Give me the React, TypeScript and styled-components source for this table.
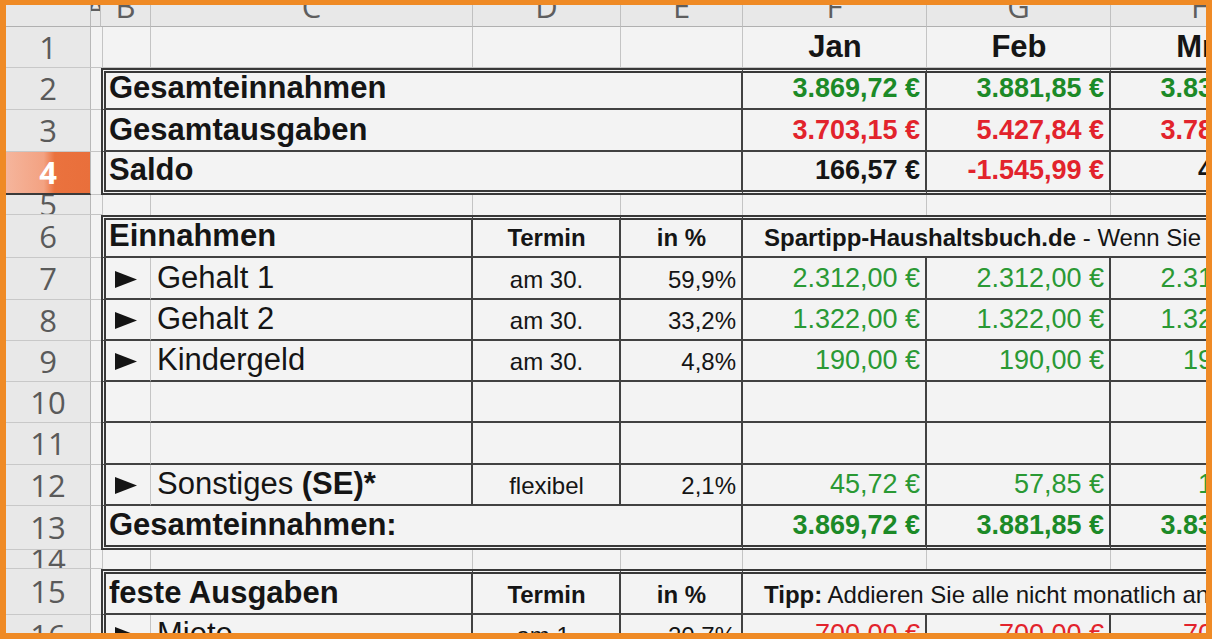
import React from "react";
import styled, { createGlobalStyle } from "styled-components";

type Line = "none" | "grid" | "dark" | "double";
type Size = "lg" | "md" | "sm";
type Tone = "ink" | "green" | "red" | "greenLight";

const line = (l: Line = "none") => {
  switch (l) {
    case "grid":
      return "1px solid #c4c4c4";
    case "dark":
      return "2px solid #414141";
    case "double":
      return "5px double #383838";
    default:
      return "0 none";
  }
};

const SIZE: Record<Size, { fs: number; pb: number }> = {
  lg: { fs: 31, pb: 5.5 },
  md: { fs: 27, pb: 6.5 },
  sm: { fs: 24, pb: 6 },
};

const TONE: Record<Tone, string> = {
  ink: "#151515",
  green: "#1c8a27",
  greenLight: "#2a9934",
  red: "#e2232c",
};

const GlobalStyle = createGlobalStyle`
  html, body { margin: 0; padding: 0; background: #ef8a25; }
  #root { width: 1212px; height: 639px; }
`;

const Frame = styled.div`
  width: 1212px;
  height: 639px;
  box-sizing: border-box;
  border-style: solid;
  border-color: #ef8a25;
  border-width: 5px 6px 6px 6px;
  overflow: hidden;
  background: #f3f3f3;
`;

const Sheet = styled.div`
  display: grid;
  grid-template-columns: 85px 10px 50px 322px 148px 122px 184px 184px 184px;
  grid-template-rows: 22px 41px 42px 42px 43px 20px 43px 42px 41px 41px 41px 42px 41px 44px 19px 46px 41px;
  width: 1289px;
  font-family: "Liberation Sans", Arial, sans-serif;
`;

const Corner = styled.div`
  background: #e8e8e8;
  box-sizing: border-box;
  border-right: 1px solid #b8b8b8;
  border-bottom: 1px solid #b0b0b0;
`;

const ColHead = styled.div`
  background: #e8e8e8;
  box-sizing: border-box;
  border-right: 1px solid #c0c0c0;
  border-bottom: 1px solid #b0b0b0;
  overflow: hidden;
  display: flex;
  justify-content: center;
  align-items: flex-start;
`;

const HeadLabel = styled.span`
  font-family: "Open Sans", sans-serif;
  font-size: 31px;
  line-height: 30px;
  color: #5e5e5e;
  margin-top: -14px;
`;

const RowHead = styled.div<{ $active?: boolean }>`
  box-sizing: border-box;
  display: flex;
  align-items: center;
  justify-content: center;
  overflow: hidden;
  border-right: 1px solid #b8b8b8;
  border-bottom: ${(p) => (p.$active ? "2px solid #3a3a3a" : "1px solid #c8c8c8")};
  background: ${(p) =>
    p.$active
      ? "linear-gradient(90deg, #f5b59c 0%, #f3a282 45%, #ea723e 58%, #e96f3b 100%)"
      : "#e8e8e8"};
  color: ${(p) => (p.$active ? "#ffffff" : "#5a5a5a")};
  font-family: "Open Sans", sans-serif;
  font-weight: ${(p) => (p.$active ? 700 : 400)};
  font-size: 31px;
  line-height: 1;
`;

interface CellProps {
  $span?: number;
  $t?: Line;
  $r?: Line;
  $b?: Line;
  $l?: Line;
  $align?: "left" | "center" | "right";
  $size?: Size;
  $bold?: boolean;
  $tone?: Tone;
  $indent?: number;
}

const Cell = styled.div<CellProps>`
  grid-column: span ${(p) => p.$span ?? 1};
  box-sizing: border-box;
  min-width: 0;
  display: flex;
  align-items: flex-end;
  justify-content: ${(p) =>
    p.$align === "right" ? "flex-end" : p.$align === "center" ? "center" : "flex-start"};
  padding: 0 5px ${(p) => SIZE[p.$size ?? "lg"].pb}px ${(p) => p.$indent ?? 6}px;
  border-top: ${(p) => line(p.$t)};
  border-right: ${(p) => line(p.$r ?? "grid")};
  border-bottom: ${(p) => line(p.$b ?? "grid")};
  border-left: ${(p) => line(p.$l)};
  font-size: ${(p) => SIZE[p.$size ?? "lg"].fs}px;
  font-weight: ${(p) => (p.$bold ? 700 : 400)};
  color: ${(p) => TONE[p.$tone ?? "ink"]};
  line-height: 1;
  white-space: nowrap;
  overflow: hidden;
`;

const Txt = styled.span`
  white-space: pre;
`;

const Strong = styled.b`
  font-weight: 700;
`;

const ArrowIcon = styled.svg`
  display: block;
  margin-bottom: 5px;
  flex: none;
`;

const Arrow = () => (
  <ArrowIcon width="22" height="17" viewBox="0 0 22 17">
    <polygon points="0,0 22,8.5 0,17" fill="#141414" />
  </ArrowIcon>
);

type Val = { text: string; tone: Tone };

const SummaryRow = ({
  n,
  label,
  vals,
  first,
  last,
  active,
}: {
  n: number;
  label: string;
  vals: Val[];
  first?: boolean;
  last?: boolean;
  active?: boolean;
}) => {
  const t: Line = first ? "double" : "none";
  const b: Line = last ? "double" : "dark";
  return (
    <>
      <RowHead $active={active}>{n}</RowHead>
      <Cell $r="none" />
      <Cell $span={4} $l="double" $t={t} $r="dark" $b={b} $bold $indent={3}>
        {label}
      </Cell>
      {vals.map((v, i) => (
        <Cell key={i} $t={t} $r="dark" $b={b} $align="right" $size="md" $bold $tone={v.tone}>
          {v.text}
        </Cell>
      ))}
    </>
  );
};

const SectionHead = ({ n, title, note }: { n: number; title: string; note: React.ReactNode }) => (
  <>
    <RowHead>{n}</RowHead>
    <Cell $r="none" />
    <Cell $span={2} $l="double" $t="double" $r="dark" $b="dark" $bold $indent={3}>
      {title}
    </Cell>
    <Cell $t="double" $r="dark" $b="dark" $bold $size="sm" $align="center">
      Termin
    </Cell>
    <Cell $t="double" $r="dark" $b="dark" $bold $size="sm" $align="center">
      in %
    </Cell>
    <Cell $span={3} $t="double" $r="none" $b="dark" $size="sm" $indent={21}>
      <Txt>{note}</Txt>
    </Cell>
  </>
);

const ItemRow = ({
  n,
  label,
  termin,
  pct,
  vals,
  arrow = true,
}: {
  n: number;
  label?: React.ReactNode;
  termin?: string;
  pct?: string;
  vals?: Val[];
  arrow?: boolean;
}) => (
  <>
    <RowHead>{n}</RowHead>
    <Cell $r="none" />
    <Cell $l="double" $r="grid" $b="dark" $indent={9}>
      {arrow && <Arrow />}
    </Cell>
    <Cell $r="dark" $b="dark" $indent={6}>
      {label && <Txt>{label}</Txt>}
    </Cell>
    <Cell $r="dark" $b="dark" $size="sm" $align="center">
      {termin}
    </Cell>
    <Cell $r="dark" $b="dark" $size="sm" $align="right">
      {pct}
    </Cell>
    {(vals ?? [null, null, null]).map((v, i) => (
      <Cell key={i} $r="dark" $b="dark" $size="md" $align="right" $tone={v?.tone ?? "ink"}>
        {v?.text}
      </Cell>
    ))}
  </>
);

const SpacerRow = ({ n }: { n: number }) => (
  <>
    <RowHead>{n}</RowHead>
    {Array.from({ length: 8 }).map((_, i) => (
      <Cell key={i} $b={i === 0 ? "grid" : "none"} />
    ))}
  </>
);

const g = (text: string): Val => ({ text, tone: "greenLight" });
const G = (text: string): Val => ({ text, tone: "green" });
const R = (text: string): Val => ({ text, tone: "red" });
const K = (text: string): Val => ({ text, tone: "ink" });

export default function App() {
  return (
    <>
      <GlobalStyle />
      <Frame>
        <Sheet>
          <Corner />
          {["A", "B", "C", "D", "E", "F", "G", "H"].map((l) => (
            <ColHead key={l}>
              <HeadLabel>{l}</HeadLabel>
            </ColHead>
          ))}

          <RowHead>1</RowHead>
          <Cell />
          <Cell />
          <Cell />
          <Cell />
          <Cell />
          <Cell $bold $align="center">
            Jan
          </Cell>
          <Cell $bold $align="center">
            Feb
          </Cell>
          <Cell $bold $align="center">
            Mrz
          </Cell>

          <SummaryRow
            n={2}
            first
            label="Gesamteinnahmen"
            vals={[G("3.869,72 €"), G("3.881,85 €"), G("3.836,48 €")]}
          />
          <SummaryRow
            n={3}
            label="Gesamtausgaben"
            vals={[R("3.703,15 €"), R("5.427,84 €"), R("3.789,00 €")]}
          />
          <SummaryRow
            n={4}
            last
            active
            label="Saldo"
            vals={[K("166,57 €"), R("-1.545,99 €"), K("47,48 €")]}
          />

          <SpacerRow n={5} />

          <SectionHead
            n={6}
            title="Einnahmen"
            note={
              <>
                <Strong>Spartipp-Haushaltsbuch.de</Strong> - Wenn Sie Fragen haben, besuchen Sie uns
              </>
            }
          />
          <ItemRow
            n={7}
            label="Gehalt 1"
            termin="am 30."
            pct="59,9%"
            vals={[g("2.312,00 €"), g("2.312,00 €"), g("2.312,00 €")]}
          />
          <ItemRow
            n={8}
            label="Gehalt 2"
            termin="am 30."
            pct="33,2%"
            vals={[g("1.322,00 €"), g("1.322,00 €"), g("1.322,00 €")]}
          />
          <ItemRow
            n={9}
            label="Kindergeld"
            termin="am 30."
            pct="4,8%"
            vals={[g("190,00 €"), g("190,00 €"), g("190,00 €")]}
          />
          <ItemRow n={10} arrow={false} />
          <ItemRow n={11} arrow={false} />
          <ItemRow
            n={12}
            label={
              <>
                Sonstiges <Strong>(SE)*</Strong>
              </>
            }
            termin="flexibel"
            pct="2,1%"
            vals={[g("45,72 €"), g("57,85 €"), g("12,48 €")]}
          />
          <SummaryRow
            n={13}
            last
            label="Gesamteinnahmen:"
            vals={[G("3.869,72 €"), G("3.881,85 €"), G("3.836,48 €")]}
          />

          <SpacerRow n={14} />

          <SectionHead
            n={15}
            title="feste Ausgaben"
            note={
              <>
                <Strong>Tipp:</Strong> Addieren Sie alle nicht monatlich anfallenden Ausgaben
              </>
            }
          />
          <ItemRow
            n={16}
            label="Miete"
            termin="am 1."
            pct="20,7%"
            vals={[R("700,00 €"), R("700,00 €"), R("700,00 €")]}
          />
        </Sheet>
      </Frame>
    </>
  );
}
